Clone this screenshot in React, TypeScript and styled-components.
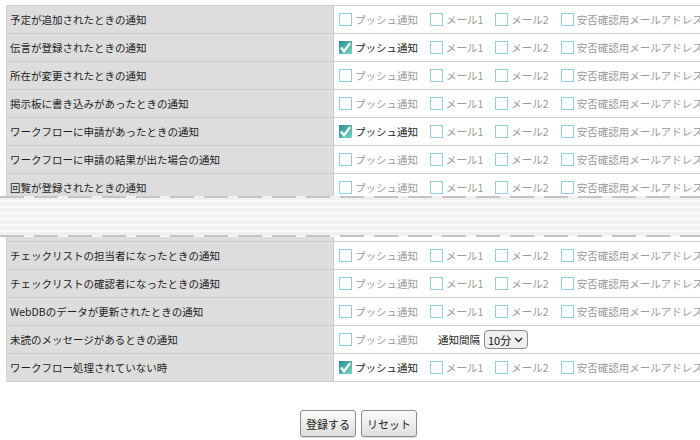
import React from 'react';
import styled, { createGlobalStyle } from 'styled-components';

const GlobalStyle = createGlobalStyle`
  html, body {
    margin: 0;
    padding: 0;
    background: #ffffff;
    overflow: hidden;
  }
  body {
    font-family: "Noto Sans CJK JP", "Noto Sans", sans-serif;
    font-size: 10.5px;
    color: #222;
  }
`;

const Page = styled.div`
  width: 700px;
  height: 440px;
  overflow: hidden;
  padding: 5px 0 0 6px;
  box-sizing: border-box;
`;

const Table = styled.div<{ $open?: boolean }>`
  width: 730px;
  border-top: ${(p) => (p.$open ? 'none' : '1px solid #cfcfcf')};
  border-left: 1px solid #d4d4d4;
`;

const Clip = styled.div<{ $height: number }>`
  height: ${(p) => p.$height}px;
  overflow: hidden;
`;

const Row = styled.div<{ $height?: number }>`
  display: grid;
  grid-template-columns: 326px 1fr;
  height: ${(p) => p.$height ?? 27}px;
  border-bottom: 1px solid #cccccc;
  overflow: hidden;
`;

const LabelCell = styled.div`
  background: #dddddd;
  display: flex;
  align-items: center;
  padding-left: 3px;
  color: #1e1e1e;
  white-space: nowrap;
`;

const OptionCell = styled.div`
  border-left: 1px solid #c8c8c8;
  display: flex;
  align-items: center;
  padding-left: 5px;
  gap: 12px;
  white-space: nowrap;
`;

const Option = styled.label<{ $on?: boolean }>`
  display: flex;
  align-items: center;
  gap: 3px;
  color: ${(p) => (p.$on ? '#1e1e1e' : '#9a9a9a')};
`;

const Box = styled.span`
  display: inline-block;
  width: 11px;
  height: 11px;
  border: 1px solid #8fd0df;
  background: #fff;
`;

const Interval = styled.div`
  display: flex;
  align-items: center;
  gap: 4px;
  margin-left: 8px;
  color: #1e1e1e;
`;

const FakeSelect = styled.span`
  display: inline-flex;
  align-items: center;
  justify-content: space-between;
  box-sizing: border-box;
  width: 44px;
  height: 19px;
  padding: 0 4px 0 3px;
  border: 1px solid #8a8a8a;
  border-radius: 4px;
  background: #efefef;
  color: #111;
  font-size: 11px;
`;

const Tear = styled.div`
  position: relative;
  height: 41px;
  margin-left: -6px;
  width: 706px;
  background: repeating-linear-gradient(
    to bottom,
    #f1f1f1 0px,
    #f1f1f1 4px,
    #fbfbfb 4px,
    #fbfbfb 6px
  );

  &::before,
  &::after {
    content: '';
    position: absolute;
    left: 0;
    right: 0;
    height: 2px;
    background: repeating-linear-gradient(
      to right,
      #c4c4c4 0px,
      #c4c4c4 24px,
      transparent 24px,
      transparent 34px
    );
  }
  &::before {
    top: 0;
  }
  &::after {
    bottom: 0;
  }
`;

const Actions = styled.div`
  display: flex;
  justify-content: center;
  gap: 5px;
  margin-top: 28px;
  padding-left: 11px;
`;

const Button = styled.button`
  height: 27px;
  padding: 0 5px;
  border: 1px solid #8c8c8c;
  border-radius: 3px;
  background: linear-gradient(#fbfbfb, #dedede);
  font-family: "Noto Sans CJK JP", "Noto Sans", sans-serif;
  font-size: 11px;
  color: #222;
  box-shadow: 0 1px 1px rgba(0, 0, 0, 0.15);
`;

const Checked = () => (
  <svg width="13" height="13" viewBox="0 0 13 13">
    <defs>
      <linearGradient id="cg" x1="0" y1="0" x2="1" y2="1">
        <stop offset="0" stopColor="#2b8f93" />
        <stop offset="1" stopColor="#79d3c2" />
      </linearGradient>
    </defs>
    <rect x="0" y="0" width="13" height="13" fill="url(#cg)" />
    <path d="M2 6.5 L5 10.5 L11 2.2" fill="none" stroke="#fff" strokeWidth="2.2" />
  </svg>
);

type Item = { label: string; push: boolean; interval?: boolean };

const top: Item[] = [
  { label: '予定が追加されたときの通知', push: false },
  { label: '伝言が登録されたときの通知', push: true },
  { label: '所在が変更されたときの通知', push: false },
  { label: '掲示板に書き込みがあったときの通知', push: false },
  { label: 'ワークフローに申請があったときの通知', push: true },
  { label: 'ワークフローに申請の結果が出た場合の通知', push: false },
  { label: '回覧が登録されたときの通知', push: false },
];

const bottom: Item[] = [
  { label: 'チェックリストの担当者になったときの通知', push: false },
  { label: 'チェックリストの確認者になったときの通知', push: false },
  { label: 'WebDBのデータが更新されたときの通知', push: false },
  { label: '未読のメッセージがあるときの通知', push: false, interval: true },
  { label: 'ワークフロー処理されていない時', push: true },
];

const Options = ({ item }: { item: Item }) => (
  <OptionCell>
    <Option $on={item.push}>
      {item.push ? <Checked /> : <Box />}
      プッシュ通知
    </Option>
    {item.interval ? (
      <Interval>
        通知間隔
        <FakeSelect>
          10分
          <svg width="9" height="6" viewBox="0 0 9 6">
            <path d="M1 1 L4.5 4.5 L8 1" fill="none" stroke="#222" strokeWidth="1.3" />
          </svg>
        </FakeSelect>
      </Interval>
    ) : (
      <>
        <Option>
          <Box />
          メール1
        </Option>
        <Option>
          <Box />
          メール2
        </Option>
        <Option>
          <Box />
          安否確認用メールアドレス
        </Option>
      </>
    )}
  </OptionCell>
);

const NotifyRow = ({ item }: { item: Item }) => (
  <Row>
    <LabelCell>{item.label}</LabelCell>
    <Options item={item} />
  </Row>
);

export default function App() {
  return (
    <>
      <GlobalStyle />
      <Page>
        <Clip $height={191}>
          <Table>
            {top.map((item) => (
              <NotifyRow key={item.label} item={item} />
            ))}
          </Table>
        </Clip>
        <Tear />
        <Table $open>
          <Row $height={4}>
            <LabelCell />
            <OptionCell />
          </Row>
          {bottom.map((item) => (
            <NotifyRow key={item.label} item={item} />
          ))}
        </Table>
        <Actions>
          <Button>登録する</Button>
          <Button>リセット</Button>
        </Actions>
      </Page>
    </>
  );
}
